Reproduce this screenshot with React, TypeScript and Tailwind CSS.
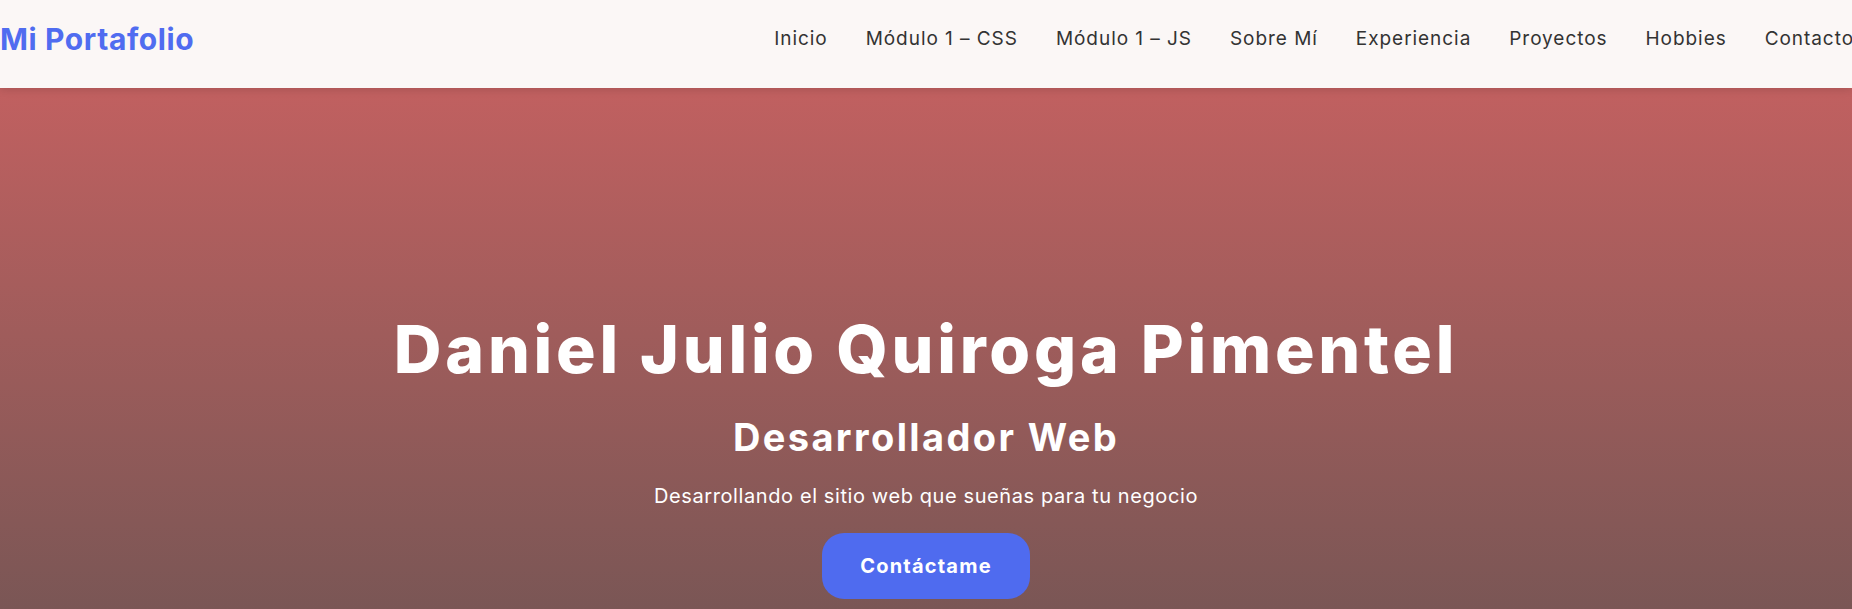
const links = ["Inicio", "Módulo 1 – CSS", "Módulo 1 – JS", "Sobre Mí", "Experiencia", "Proyectos", "Hobbies", "Contacto"];

function Header() {
  return (
    <header className="relative z-10 flex h-[88px] items-center justify-between bg-[#fbf7f6] pb-[10px] shadow-[0_2px_8px_rgba(0,0,0,0.12)]">
      <a href="#inicio" className="shrink-0 text-[30px] font-bold tracking-[0.02em] text-[#506cf0]">
        Mi Portafolio
      </a>
      <nav className="-mr-[2px] shrink-0">
        <ul className="flex gap-[38px] text-[19px] tracking-[0.05em] text-[#333333]">
          {links.map((link) => (
            <li key={link}>
              <a href="#">{link}</a>
            </li>
          ))}
        </ul>
      </nav>
    </header>
  );
}

function Hero() {
  return (
    <section
      id="inicio"
      className="flex h-[521px] flex-col items-center bg-gradient-to-b from-[#c16060] to-[#7a5655] pt-[222px] text-center text-white"
    >
      <h1 className="text-[66px] leading-[1.2] font-extrabold tracking-[0.057em]">Daniel Julio Quiroga Pimentel</h1>
      <h2 className="mt-[26px] text-[38px] leading-[1.2] font-bold tracking-[0.063em]">Desarrollador Web</h2>
      <p className="mt-[20px] text-[20px] leading-[1.5] tracking-[0.03em]">
        Desarrollando el sitio web que sueñas para tu negocio
      </p>
      <a
        href="#contacto"
        className="mt-[22px] flex h-[66px] w-[208px] items-center justify-center rounded-[22px] bg-[#4f6bef] text-[20px] font-bold tracking-[0.06em]"
      >
        Contáctame
      </a>
    </section>
  );
}

export default function App() {
  return (
    <div className="min-h-screen overflow-hidden bg-[#7a5655] font-['Inter',sans-serif]">
      <Header />
      <Hero />
    </div>
  );
}
